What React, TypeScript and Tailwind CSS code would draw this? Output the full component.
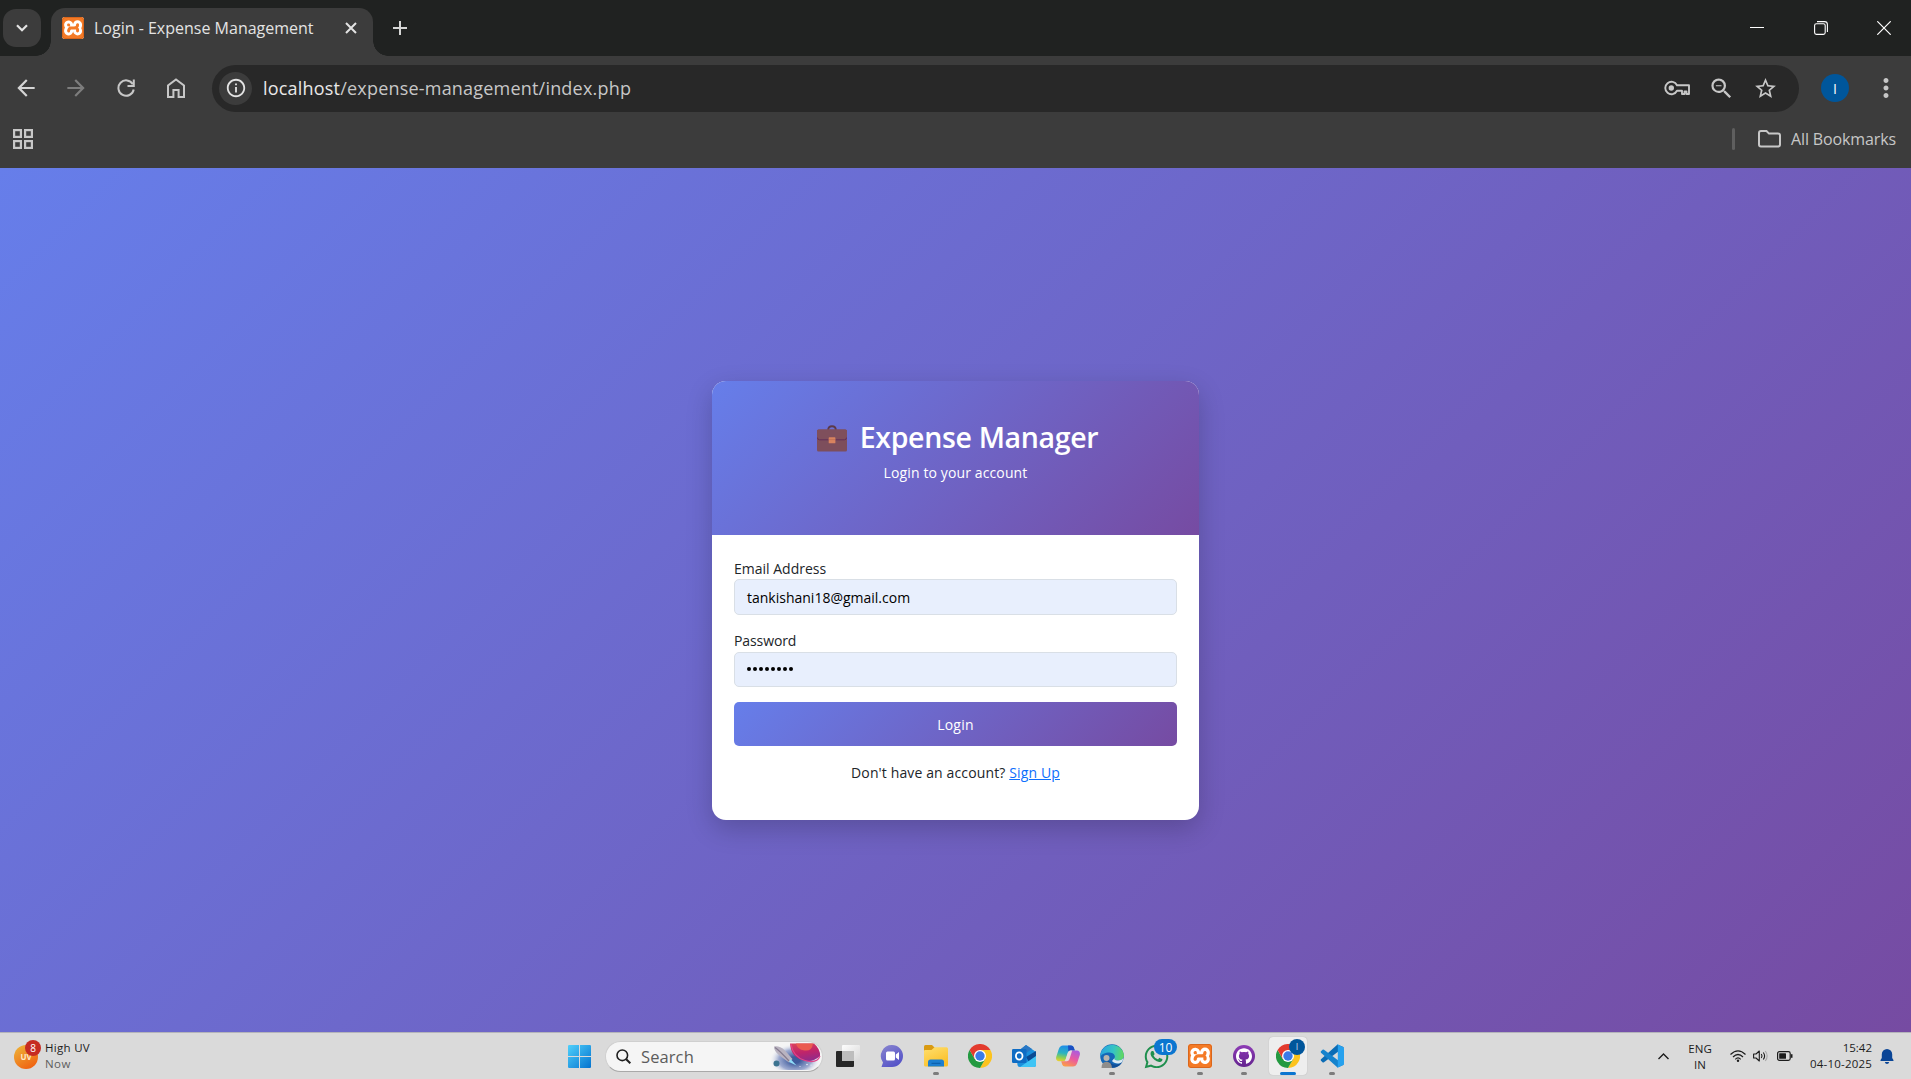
import { type ReactNode } from "react";
import { MdArrowBack, MdArrowForward, MdInfoOutline, MdZoomOut, MdStarBorder, MdMoreVert } from "react-icons/md";
import { SiXampp, SiGithub } from "react-icons/si";
import { FaWhatsapp } from "react-icons/fa";

const BRAND = "bg-[linear-gradient(135deg,#667eea_0%,#764ba2_100%)]";

function XamppLogo({ className }: { className: string }) {
  return (
    <span className={`relative grid place-items-center overflow-hidden rounded-[3px] bg-white text-[#f47a26] ${className}`}>
      <SiXampp className="size-full scale-[1.12]" />
      <span className="absolute inset-0 rounded-[3px] border border-[#d9661c]" />
    </span>
  );
}

function ChromeLogo() {
  return (
    <svg viewBox="0 0 48 48" className="size-6">
      <path d="M24 12H44.8A24 24 0 0 1 24 48L34.4 30Z" fill="#fcc31e" />
      <path d="M34.4 30 24 48A24 24 0 0 1 3.2 12L13.6 30Z" fill="#249a41" />
      <path d="M13.6 30 3.2 12A24 24 0 0 1 44.8 12H24Z" fill="#e33b2e" />
      <circle cx="24" cy="24" r="12" fill="#fff" />
      <circle cx="24" cy="24" r="9.4" fill="#3a7be8" />
    </svg>
  );
}

function Briefcase() {
  return (
    <svg viewBox="0 0 30 27" className="mt-[2px] h-[27px] w-[30px]">
      <path d="M11.2 5C11.2 0 18.8 0 18.8 5" fill="none" stroke="#5b3a4a" strokeWidth="1.9" />
      <rect x="0" y="4.5" width="30" height="22" rx="1.6" fill="#7d4e5c" />
      <path d="M0 6.1Q0 4.5 1.6 4.5H28.4Q30 4.5 30 6.1V13Q30 14.8 28 14.8H2Q0 14.8 0 13Z" fill="#7f4f5c" />
      <path d="M0.4 12.6Q0.6 14.8 2.5 14.8H27.5Q29.4 14.8 29.6 12.6" fill="none" stroke="#632f57" strokeWidth="1" />
      <rect x="11.7" y="12.3" width="6.7" height="6" rx="0.6" fill="#d9835f" />
      <path d="M11.7 14.6H18.4" stroke="#b9694f" strokeWidth="0.6" />
    </svg>
  );
}

function TabStrip() {
  return (
    <div className="flex h-14 shrink-0 bg-[#202221]">
      <div className="mt-[9px] ml-[3px] grid size-[38px] place-items-center rounded-[13px] bg-[#3c3c3c]">
        <svg viewBox="0 0 12 8" className="h-2 w-3" fill="none" stroke="#e3e3e3" strokeWidth="2.2">
          <path d="M1 1.2 6 6.2 11 1.2" />
        </svg>
      </div>
      <div className="relative mt-2 ml-[10px] flex h-12 w-[322px] items-center rounded-t-[14px] bg-[#3c3c3c] pb-[8px] pl-[11px]">
        <span className="absolute bottom-0 -left-[15px] size-[15px] bg-[radial-gradient(circle_at_0_0,transparent_14.5px,#3c3c3c_15px)]" />
        <span className="absolute -right-[15px] bottom-0 size-[15px] bg-[radial-gradient(circle_at_100%_0,transparent_14.5px,#3c3c3c_15px)]" />
        <XamppLogo className="size-[22px]" />
        <span className="ml-[10px] w-[234px] text-[16px] whitespace-nowrap text-[#e3e3e3]">
          Login - Expense Management
        </span>
        <svg viewBox="0 0 12 12" className="ml-[17px] size-3" stroke="#e3e3e3" strokeWidth="2">
          <path d="M1 1 11 11M11 1 1 11" />
        </svg>
      </div>
      <svg viewBox="0 0 14 14" className="mt-[21px] ml-5 size-[14px]" stroke="#d6d6d6" strokeWidth="2">
        <path d="M7 0V14M0 7H14" />
      </svg>
      <div className="ml-auto flex items-start gap-[49.5px] pt-[21px] pr-5 text-white">
        <svg viewBox="0 0 14 14" className="size-[14px]" stroke="currentColor" strokeWidth="1">
          <path d="M0 6.5H14" />
        </svg>
        <svg viewBox="0 0 14 14" className="size-[14px]" fill="none" stroke="currentColor" strokeWidth="1.1">
          <rect x="0.6" y="2.8" width="10.6" height="10.6" rx="1.8" />
          <path d="M3 0.6H10.5Q13.4 0.6 13.4 3.5V11" />
        </svg>
        <svg viewBox="0 0 14 14" className="size-[14px]" stroke="currentColor" strokeWidth="1.2">
          <path d="M0.3 0.3 13.7 13.7M13.7 0.3 0.3 13.7" />
        </svg>
      </div>
    </div>
  );
}

function Toolbar() {
  return (
    <div className="flex h-16 items-center text-[#c7c7c7]">
      <div className="flex items-center pl-[1px]">
        <span className="grid w-[50px] place-items-center"><MdArrowBack className="size-[26px] text-[#d4d4d4]" /></span>
        <span className="grid w-[50px] place-items-center"><MdArrowForward className="size-[26px] text-[#7d7d7d]" /></span>
        <span className="grid w-[50px] place-items-center">
          <svg viewBox="0 0 18 18" className="size-[18px]" fill="none" stroke="currentColor" strokeWidth="2">
            <path d="M15.8 5.2A7.700 7.700 0 1 0 16.700 10.500" />
            <path d="M16.800 0.500V7H10.500" />
          </svg>
        </span>
        <span className="grid w-[50px] place-items-center">
          <svg viewBox="0 0 18 20" className="h-5 w-[18px]" fill="none" stroke="currentColor" strokeWidth="2">
            <path d="M1 19V7.5L9 1.4 17 7.5V19H11.6V12H6.4V19Z" />
          </svg>
        </span>
      </div>
      <div className="ml-[11px] flex h-[47px] w-[1587px] items-center rounded-full bg-[#282828] pl-[7px]">
        <span className="grid size-[33px] place-items-center rounded-full bg-[#3c3c3c]">
          <MdInfoOutline className="size-[22px] text-[#e3e3e3]" />
        </span>
        <span className="ml-[11px] text-[18px] tracking-[0.2px] whitespace-nowrap text-[#c7c7c7]">
          <span className="text-[#e8e8e8]">localhost</span>/expense-management/index.php
        </span>
        <span className="mr-[21px] ml-auto flex items-center">
          <svg viewBox="0 0 26 16" className="h-4 w-[26px]" fill="none" stroke="currentColor" strokeWidth="1.9" strokeLinejoin="round">
            <path d="M13 5.200A6.200 6.200 0 1 0 13 10.800H18V14H20.500V11.500H22.500V14H25V5.200Z" />
            <circle cx="7.300" cy="8" r="2.700" fill="currentColor" stroke="none" />
          </svg>
          <MdZoomOut className="ml-[18px] size-[27px]" />
          <MdStarBorder className="ml-[18px] size-[25px]" />
        </span>
      </div>
      <span className="ml-[22px] grid size-7 place-items-center rounded-full bg-[#00569b] text-[14px] text-white">I</span>
      <MdMoreVert className="ml-[22px] size-[30px]" />
    </div>
  );
}

function BookmarksBar() {
  return (
    <div className="flex h-12 items-center pb-[10px] pl-[13px] text-[#c7c7c7]">
      <svg viewBox="0 0 20 20" className="size-5" fill="none" stroke="currentColor" strokeWidth="2.2">
        <rect x="1.1" y="1.1" width="6.8" height="6.8" />
        <rect x="12.1" y="1.1" width="6.8" height="6.8" />
        <rect x="1.1" y="12.1" width="6.8" height="6.8" />
        <rect x="12.1" y="12.1" width="6.8" height="6.8" />
      </svg>
      <span className="ml-auto h-[22px] w-[3px] rounded-full bg-[#5f5f5f]" />
      <svg viewBox="0 0 23 18" className="ml-[23px] h-[18px] w-[23px]" fill="none" stroke="currentColor" strokeWidth="2">
        <path d="M1 3Q1 1 3 1H8.5L11 3.6H20Q22 3.6 22 5.6V14.5Q22 16.5 20 16.5H3Q1 16.5 1 14.5Z" />
      </svg>
      <span className="mr-[14px] ml-[10px] w-[106px] text-[16px] tracking-[-0.13px] whitespace-nowrap">All Bookmarks</span>
    </div>
  );
}

function LoginCard() {
  return (
    <div className="h-[439px] w-[487px] overflow-hidden rounded-[14px] bg-white text-[14px] leading-[22px] text-[#212529] shadow-[0_9px_27px_rgba(0,0,0,0.2)]">
      <div className={`flex h-[154px] flex-col items-center pt-[39px] text-white ${BRAND}`}>
        <div className="flex h-[35px] items-center pl-1">
          <Briefcase />
          <span className="ml-[13px] text-[28.5px] font-semibold tracking-[-0.33px] whitespace-nowrap">Expense Manager</span>
        </div>
        <span className="mt-[7px] tracking-[0.12px] whitespace-nowrap">Login to your account</span>
      </div>
      <div className="flex flex-col px-[22px] pt-[23px]">
        <label className="leading-[21px]">Email Address</label>
        <div className="flex h-9 items-center rounded-[5px] border border-[#d9dfe6] bg-[#e8effd] px-3 pt-0.5 text-black">
          tankishani18@gmail.com
        </div>
        <label className="mt-[15px] tracking-[-0.1px]">Password</label>
        <div className="flex h-[35px] items-center gap-[2px] rounded-[5px] border border-[#d9dfe6] bg-[#e8effd] px-3">
          {Array.from({ length: 8 }, (_, i) => (
            <span key={i} className="size-1 rounded-full bg-black" />
          ))}
        </div>
        <button className={`mt-[15px] h-11 rounded-[5px] pt-0.5 tracking-[0.25px] text-white ${BRAND}`}>Login</button>
        <p className="mt-4 text-center tracking-[0.13px] whitespace-nowrap">
          Don't have an account? <a className="text-[#0d6efd] underline">Sign Up</a>
        </p>
      </div>
    </div>
  );
}

function TaskItem({ children, state = "idle" }: { children: ReactNode; state?: "idle" | "open" | "active" }) {
  return (
    <div className="grid h-full w-11 place-items-center">
      <div
        className={`relative grid h-[38px] w-[38px] place-items-center rounded-[4px] ${
          state === "active" ? "bg-[#eeeeee] shadow-[0_0_1px_rgba(0,0,0,0.25)]" : ""
        }`}
      >
        {children}
        {state === "open" && <span className="absolute bottom-0 h-[3px] w-1.5 rounded-full bg-[#7c7c7c]" />}
        {state === "active" && <span className="absolute bottom-0 h-[3px] w-4 rounded-full bg-[#0b76d0]" />}
      </div>
    </div>
  );
}

function TaskView() {
  return (
    <svg viewBox="0 0 24 22" className="h-[22px] w-6">
      <defs>
        <linearGradient id="tv" x1="0" y1="0" x2="1" y2="1">
          <stop offset="0" stopColor="#fdfdfd" />
          <stop offset="1" stopColor="#d8d8d8" />
        </linearGradient>
      </defs>
      <rect x="0" y="6" width="18" height="16" rx="1" fill="#272727" />
      <rect x="6" y="0" width="18" height="16" rx="1" fill="url(#tv)" />
      <rect x="6" y="6" width="12" height="10" fill="#bdbdbd" />
    </svg>
  );
}

function ChatLogo() {
  return (
    <svg viewBox="0 0 24 24" className="size-6">
      <defs>
        <linearGradient id="ch" x1="0" y1="0" x2="0.6" y2="1">
          <stop offset="0" stopColor="#8a86cf" />
          <stop offset="1" stopColor="#5553c8" />
        </linearGradient>
      </defs>
      <path d="M12 1A11 11 0 1 1 12 23H1.5L3 18.500A11 11 0 0 1 12 1Z" fill="url(#ch)" />
      <rect x="6" y="7.500" width="9" height="9" rx="1.500" fill="#fff" />
      <path d="M15.800 10.500 19 8V16L15.800 13.500Z" fill="#fff" />
    </svg>
  );
}

function ExplorerLogo() {
  return (
    <svg viewBox="0 0 24 22" className="h-[22px] w-6">
      <defs>
        <linearGradient id="ex" x1="0" y1="0" x2="0.5" y2="1">
          <stop offset="0" stopColor="#ffdf6e" />
          <stop offset="1" stopColor="#fbc02a" />
        </linearGradient>
      </defs>
      <path d="M0 1.500Q0 0 1.500 0H8L10.500 2.500V7H0Z" fill="#d99a12" />
      <path d="M0 6Q0 5 1 5H7.500L10.500 2.200H22.500Q24 2.200 24 3.700V20Q24 21.500 22.500 21.500H1.500Q0 21.500 0 20Z" fill="url(#ex)" />
      <path d="M4 21.500V17Q4 14.500 6.500 14.500H17.500Q20 14.500 20 17V21.500Z" fill="#1c7fd0" />
      <path d="M7.500 18.300H16.500" stroke="#0b5ca5" strokeWidth="1" />
    </svg>
  );
}

function OutlookLogo() {
  return (
    <svg viewBox="0 0 24 22" className="h-[22px] w-6">
      <path d="M4 8 14 0 24 7V20Q24 22 22 22H8Q5.500 22 5.500 20Z" fill="#1a8fdc" />
      <path d="M5 7 14 0 20 4 10 11Z" fill="#2a77c4" />
      <path d="M14 12 24 6V12L17 17Z" fill="#0a4a93" />
      <path d="M24 11 8 22H22Q24 22 24 20Z" fill="#3fc4f5" />
      <rect x="0" y="4" width="14.500" height="14" rx="1.200" fill="#0f6cc4" />
      <ellipse cx="7.200" cy="11" rx="3.300" ry="3.700" fill="none" stroke="#fff" strokeWidth="1.800" />
    </svg>
  );
}

function CopilotLogo() {
  return (
    <svg viewBox="0 0 24 22" className="h-[22px] w-6">
      <defs>
        <linearGradient id="cpA" x1="0.3" y1="0" x2="0.1" y2="1">
          <stop offset="0" stopColor="#1f8ee8" />
          <stop offset="0.45" stopColor="#2bb3c0" />
          <stop offset="0.75" stopColor="#8fcf52" />
          <stop offset="1" stopColor="#f4cf2c" />
        </linearGradient>
        <linearGradient id="cpB" x1="0.8" y1="0" x2="0.3" y2="1">
          <stop offset="0" stopColor="#a95be0" />
          <stop offset="0.5" stopColor="#ea5aa0" />
          <stop offset="1" stopColor="#fb9a4b" />
        </linearGradient>
      </defs>
      <path d="M7 0.500H15Q17.200 0.500 17.800 2.500L18.800 5.500H14.500Q12.800 5.500 12.200 7.200L10 14Q9.200 16.200 7 16.200H3Q-0.600 16 0.200 12L2.800 4Q4 0.500 7 0.500Z" fill="url(#cpA)" />
      <path d="M12 0.500H15Q17.200 0.500 17.800 2.500L18.800 5.500H14.500Q13 5.500 12.400 7Z" fill="#1b4fc2" />
      <path d="M17 21.500H9Q6.800 21.500 6.200 19.500L5.200 16.200H8Q10 16 10.800 13.800L13 7.500Q13.600 5.500 15.500 5.500H21Q24.600 6 23.800 10L21.200 18Q20 21.500 17 21.500Z" fill="url(#cpB)" />
      <path d="M9.300 15.200 11.800 7.600Q12.400 5.800 14 5.500H16.200L13.500 14Q12.800 16.200 10.800 16.200H8Q9 16 9.300 15.200Z" fill="#e6dcde" />
    </svg>
  );
}

function EdgeLogo() {
  return (
    <svg viewBox="0 0 24 24" className="size-6">
      <defs>
        <linearGradient id="edA" x1="0" y1="0.4" x2="1" y2="0.5">
          <stop offset="0" stopColor="#2aa3e0" />
          <stop offset="0.55" stopColor="#35c4c4" />
          <stop offset="1" stopColor="#62d95c" />
        </linearGradient>
      </defs>
      <circle cx="12" cy="12" r="11.800" fill="#1568b8" />
      <path d="M0.300 11A11.900 11.900 0 0 1 23.900 11C24 15 21 16.500 18 16.500 15 16.500 13.800 15.300 14.500 14 16 11.500 13 8.500 9.500 8.500 5 8.500 1.500 10 0.300 13Z" fill="url(#edA)" />
      <path d="M8.500 13.500C8 18 12 21 17 20.500 20 20 21.500 18.500 22.500 17.500 20.500 22 16 24 12 23.800 8 23 7 17 8.500 13.500Z" fill="#114f97" />
      <path d="M14.500 14C13.800 15.300 15 16.500 18 16.500 20 16.500 22 15.800 23.200 14.300L22.500 17.500C20 20.500 14 20 12 17Z" fill="#dceaf2" />
      <circle cx="6.500" cy="14" r="3" fill="#b9b4ae" />
      <path d="M1.500 24Q1.500 17.800 6.500 17.800T12 24Z" fill="#8f8d8b" />
    </svg>
  );
}

function VsCodeLogo() {
  return (
    <svg viewBox="0 0 24 24" className="size-6">
      <path d="M17.500 0.500 1 15.200Q0.200 16 1 16.800L2.500 18.200Q3.200 18.700 4 18.200L24 3.200Z" fill="#0b6cb5" />
      <path d="M17.500 23.500 1 8.800Q0.200 8 1 7.200L2.500 5.800Q3.200 5.300 4 5.800L24 20.800Z" fill="#1583cd" />
      <path d="M17.500 0.300 23 2.900Q24 3.400 24 4.500V19.500Q24 20.600 23 21.100L17.500 23.700Q16.800 23.500 17.800 22.500V1.500Q16.800 0.500 17.500 0.300Z" fill="#26a1ee" />
    </svg>
  );
}

function SearchArt() {
  return (
    <svg viewBox="0 0 50 27" className="h-[27px] w-[50px]">
      <defs>
        <radialGradient id="neb" cx="0.5" cy="0.5" r="0.5">
          <stop offset="0.2" stopColor="#3e5b9c" />
          <stop offset="0.65" stopColor="#7d8fc2" stopOpacity="0.75" />
          <stop offset="1" stopColor="#e9ecf5" stopOpacity="0" />
        </radialGradient>
        <linearGradient id="pla" x1="0.3" y1="0" x2="0.6" y2="1">
          <stop offset="0" stopColor="#d8405a" />
          <stop offset="0.5" stopColor="#c0246a" />
          <stop offset="1" stopColor="#8f2b8c" />
        </linearGradient>
      </defs>
      <ellipse cx="24" cy="17" rx="25" ry="16" fill="url(#neb)" />
      <path d="M19 0.500H43Q49.500 6 49 13 43 19 34 18 20 15 19 0.500Z" fill="url(#pla)" />
      <path d="M25 0.500H42Q41 8.500 33.500 7.500T25 0.500Z" fill="#ea5a50" />
      <path d="M20 1Q22 14 34 17.500T49 13" fill="none" stroke="#e0468a" strokeWidth="1.200" />
      <path d="M3 3.500Q8.500 2.500 14 7.500L21.500 16 18 19.500 8.500 12.500Q3 8.500 3 3.500Z" fill="#b9b3c0" />
      <path d="M4 4.500Q9 8 18 18" stroke="#857b8e" strokeWidth="1.300" fill="none" />
      <path d="M19.500 16 25.500 22.500 18 19Z" fill="#8fdcf8" />
      <circle cx="5.500" cy="20.500" r="3" fill="#3c7390" />
      <circle cx="36" cy="21.500" r="0.700" fill="#fff" />
      <circle cx="29" cy="23.500" r="0.500" fill="#fff" />
      <circle cx="40" cy="22" r="0.500" fill="#fff" />
    </svg>
  );
}

function Taskbar() {
  return (
    <div className="flex h-[47px] shrink-0 items-center border-t border-[#b4b4ba] bg-[#dadada] text-[#1c1c1c]">
      <div className="flex w-[557px] items-center pl-[14px]">
        <div className="relative mt-0.5 grid size-6 place-items-center rounded-full bg-[linear-gradient(150deg,#eeb83a,#f0560c)] text-[8px] font-bold text-[#fde9c8]">
          UV
          <span className="absolute -top-[5px] left-[11px] grid size-4 place-items-center rounded-full bg-[#c62b22] text-[10px] font-normal text-white">8</span>
        </div>
        <div className="ml-[7px] text-[11.5px] leading-4 whitespace-nowrap">
          <div className="tracking-[0.3px]">High UV</div>
          <div className="tracking-[0.4px] text-[#5d5d5d]">Now</div>
        </div>
      </div>
      <TaskItem>
        <svg viewBox="0 0 23 23" className="size-[23px]">
          <defs>
            <linearGradient id="win" x1="0" y1="0" x2="1" y2="1">
              <stop offset="0" stopColor="#4fd0fb" />
              <stop offset="1" stopColor="#0573cf" />
            </linearGradient>
          </defs>
          <path d="M0.800 0H11V11H0V0.800ZM12 0H22.200L23 0.800V11H12ZM0 12H11V23H0.800L0 22.200ZM12 12H23V22.200L22.200 23H12Z" fill="url(#win)" />
        </svg>
      </TaskItem>
      <div className="mr-[3px] ml-1 flex h-[31px] w-[218px] items-center rounded-full border border-b-[#a9a9a9] border-[#cfcfcf] bg-[#f5f5f5] pr-[1px] pl-[10px]">
        <svg viewBox="0 0 15 15" className="size-[15px]" fill="none" stroke="#1f1f1f" strokeWidth="1.600">
          <circle cx="6.300" cy="6.300" r="5.300" />
          <path d="M10.200 10.200 14.300 14.300" strokeWidth="2" />
        </svg>
        <span className="ml-[10px] pt-0.5 text-[16.5px] tracking-[0.1px] text-[#5c5c5c]">Search</span>
        <span className="ml-auto"><SearchArt /></span>
      </div>
      <TaskItem><TaskView /></TaskItem>
      <TaskItem><ChatLogo /></TaskItem>
      <TaskItem state="open"><ExplorerLogo /></TaskItem>
      <TaskItem><ChromeLogo /></TaskItem>
      <TaskItem><OutlookLogo /></TaskItem>
      <TaskItem><CopilotLogo /></TaskItem>
      <TaskItem state="open"><EdgeLogo /></TaskItem>
      <TaskItem>
        <FaWhatsapp className="size-[27px] text-[#1e8f4e]" />
        <span className="absolute top-[2px] left-[17px] grid h-4 w-[23px] place-items-center rounded-full bg-[#0b76d0] text-[12px] text-white">10</span>
      </TaskItem>
      <TaskItem state="open"><XamppLogo className="size-6" /></TaskItem>
      <TaskItem state="open">
        <span className="grid size-[22px] place-items-center rounded-full bg-[linear-gradient(180deg,#8d3bb5,#64248f)]">
          <SiGithub className="size-4 text-white" />
        </span>
      </TaskItem>
      <TaskItem state="active">
        <ChromeLogo />
        <span className="absolute top-[2px] left-5 grid size-4 place-items-center rounded-full bg-[#00569b] text-[9px] text-[#c5d9ea]">I</span>
      </TaskItem>
      <TaskItem state="open"><VsCodeLogo /></TaskItem>
      <div className="ml-auto flex items-center pr-[17px] text-[11.5px] leading-4">
        <svg viewBox="0 0 11 7" className="h-[7px] w-[11px]" fill="none" stroke="currentColor" strokeWidth="1.400">
          <path d="M0.500 6 5.500 1 10.500 6" />
        </svg>
        <div className="ml-[19px] w-6 pt-px text-center tracking-[0.1px]">
          <div>ENG</div>
          <div>IN</div>
        </div>
        <svg viewBox="0 0 16 12" className="ml-[18px] h-3 w-4" fill="none" stroke="currentColor" strokeWidth="1.200">
          <path d="M0.500 4.500Q8-2.800 15.500 4.500M3 7Q8 2 13 7M5.300 9.300Q8 6.500 10.700 9.300" />
          <circle cx="8" cy="10.800" r="1.200" fill="currentColor" stroke="none" />
        </svg>
        <svg viewBox="0 0 15 12" className="ml-[7px] h-3 w-[15px]" fill="none" stroke="currentColor" strokeWidth="1.100">
          <path d="M0.600 4H3L6.300 1V11L3 8H0.600Z" strokeLinejoin="round" />
          <path d="M8.300 4Q9.800 6 8.300 8M10.300 2.500Q12.900 6 10.300 9.500" />
          <path d="M12.300 1Q16 6 12.300 11" stroke="#a8a8a8" />
        </svg>
        <svg viewBox="0 0 16 10" className="ml-[9px] h-[10px] w-4" fill="none" stroke="currentColor" strokeWidth="1.200">
          <rect x="0.600" y="0.600" width="12.600" height="8.800" rx="1.800" />
          <rect x="2.200" y="2.200" width="6.800" height="5.600" rx="0.500" fill="currentColor" stroke="none" />
          <path d="M14.700 3.200V6.800" strokeWidth="1.600" />
        </svg>
        <div className="ml-[17px] w-[62px] text-right whitespace-nowrap">
          <div>15:42</div>
          <div className="tracking-[0.2px]">04-10-2025</div>
        </div>
        <svg viewBox="0 0 14 15" className="ml-2 h-[15px] w-[14px]" fill="#0a4596">
          <path d="M7 0A5.200 5.200 0 0 1 12.200 5.200V9L13.600 11.300Q13.700 12 13 12H1Q0.300 12 0.400 11.300L1.800 9V5.200A5.200 5.200 0 0 1 7 0ZM4.800 13H9.200Q8.700 15 7 15T4.800 13Z" />
        </svg>
      </div>
    </div>
  );
}

export default function App() {
  return (
    <div className="flex h-[1079px] w-[1911px] flex-col overflow-hidden bg-[#3c3c3c] font-['Open_Sans','Noto_Sans',sans-serif]">
      <TabStrip />
      <Toolbar />
      <BookmarksBar />
      <main className={`grid min-h-0 flex-1 place-items-center ${BRAND}`}>
        <LoginCard />
      </main>
      <Taskbar />
    </div>
  );
}
